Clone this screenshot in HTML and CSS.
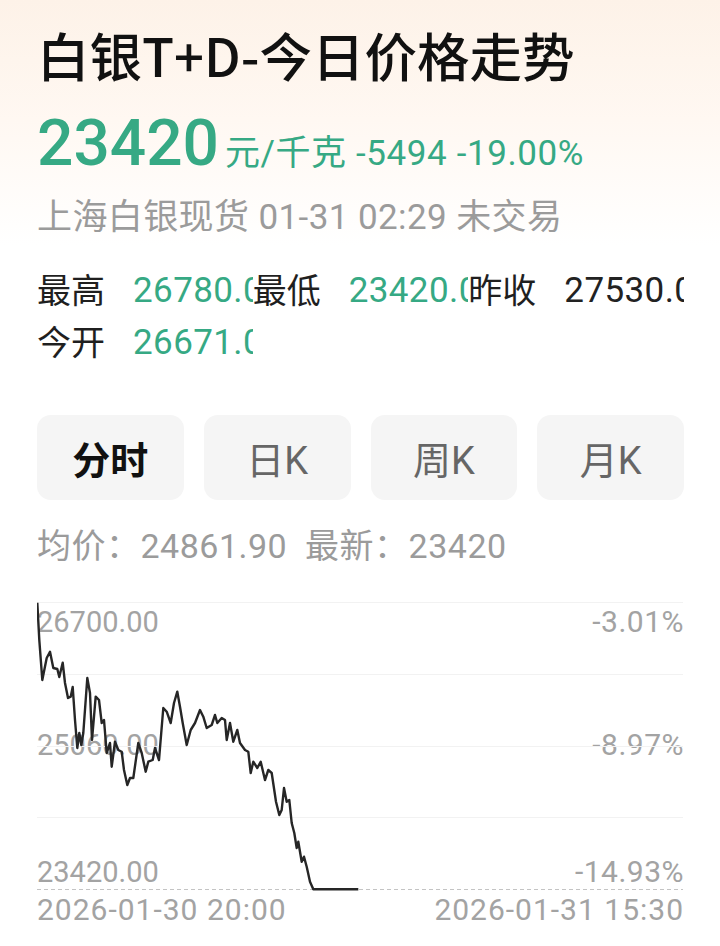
FILE: index.html
```html
<!DOCTYPE html>
<html lang="zh-CN">
<head>
<meta charset="utf-8">
<title>白银T+D-今日价格走势</title>
<link rel="stylesheet" href="styles.css">
</head>
<body>
<div class="page">
  <h1 class="title">白银T+D-今日价格走势</h1>
  <div class="price-line"><span class="price">23420</span><span class="change">元/千克 -5494 -19.00%</span></div>
  <div class="meta">上海白银现货 01-31 02:29 未交易</div>

  <div class="stats">
    <div class="stat"><span class="label">最高</span><span class="value up">26780.00</span></div>
    <div class="stat"><span class="label">最低</span><span class="value up">23420.00</span></div>
    <div class="stat"><span class="label">昨收</span><span class="value">27530.00</span></div>
    <div class="stat"><span class="label">今开</span><span class="value up">26671.00</span></div>
  </div>

  <div class="tabs">
    <div class="tab active">分时</div>
    <div class="tab">日K</div>
    <div class="tab">周K</div>
    <div class="tab">月K</div>
  </div>

  <div class="avg">均价：24861.90 &nbsp;最新：23420</div>

  <div class="chart">
    <div class="axis-label l1">26700.00</div>
    <div class="axis-label l2">25060.00</div>
    <div class="axis-label l3">23420.00</div>
    <div class="axis-label r1">-3.01%</div>
    <div class="axis-label r2">-8.97%</div>
    <div class="axis-label r3">-14.93%</div>
    <div class="axis-label t1">2026-01-30 20:00</div>
    <div class="axis-label t2">2026-01-31 15:30</div>
    <svg class="plot" width="646" height="350" viewBox="37 596 646 350">
      <g stroke="#f2f2f2" stroke-width="1">
        <line x1="37" y1="602.5" x2="683" y2="602.5"/>
        <line x1="37" y1="674.5" x2="683" y2="674.5"/>
        <line x1="37" y1="746.5" x2="683" y2="746.5"/>
        <line x1="37" y1="817.5" x2="683" y2="817.5"/>
      </g>
      <line x1="37" y1="889.5" x2="683" y2="889.5" stroke="#c4c4c4" stroke-width="1" stroke-dasharray="4 3"/>
      <path fill="none" stroke="#262626" stroke-width="2.4" stroke-linejoin="round" d="M37.3 602.7 L39.3 640 L42.3 680 L46.7 658 L50 651.7 L53.3 668 L57.3 669 L59.3 677 L62.7 662.7 L65 683 L68 698 L70.7 696.7 L72.7 687 L75 720 L77.3 748 L79.3 733 L81.3 745 L83.3 733 L87.3 678 L90 693 L92 740 L95.7 696.7 L99 700 L101.7 723 L104 720 L106.7 753 L110 743 L111.7 766.7 L115 741.7 L118.3 750 L121.7 751.7 L124 770 L127.3 785 L130 778 L133.3 778 L138.3 743 L141.7 753 L145.7 771.7 L148.3 761.7 L152.7 760 L155 748 L159 760 L163.3 708 L166.7 711.7 L170.7 723 L174 703 L177.3 691.7 L180 706.7 L182.7 723 L186.7 745 L190.7 730 L195 723 L200 710 L203.3 716.7 L206.7 728 L211.7 725 L215 715 L217.3 723 L221.7 718 L225 720 L226.7 740 L230 723 L233.3 741.7 L237.3 730 L240 743 L245 750 L248.3 751.7 L250.7 773 L253.3 761.7 L257.3 768 L260.7 761.7 L265 780 L268.3 770 L271.7 773 L276 801.7 L279.3 815 L281.7 810 L284 788 L286.7 801.7 L289.3 800 L291.7 823 L294.3 833 L296.7 848 L298.3 841.7 L301.7 861.7 L304 856.7 L306.7 866.7 L310 881.7 L313.3 889.3 L358.3 889.3"/>
    </svg>
  </div>
</div>
</body>
</html>
```

FILE: styles.css
```css
* { box-sizing: border-box; }

html, body {
  margin: 0;
  padding: 0;
  background: #fff;
}

body {
  font-family: Roboto, "Noto Sans CJK SC", sans-serif;
  color: #1a1a1a;
}

.page {
  width: 720px;
  height: 946px;
  overflow: hidden;
  padding: 22px 36px 0 37px;
  background: linear-gradient(180deg, #fdf2e8 0px, #fff8f2 120px, #ffffff 245px) no-repeat;
}

.title {
  margin: 0;
  font-family: "Noto Sans CJK SC", sans-serif;
  font-size: 52.5px;
  font-weight: 500;
  line-height: 64px;
  color: #111;
  white-space: nowrap;
}

.price-line {
  margin-top: 20px;
  height: 76px;
  line-height: 76px;
  white-space: nowrap;
  color: #36a984;
}

.price {
  font-size: 64px;
  font-weight: 500;
  margin-right: 6px;
}

.change {
  font-size: 35px;
  line-height: 1;
  letter-spacing: 0.6px;
}

.meta {
  margin-top: 14px;
  font-size: 35px;
  line-height: 44px;
  letter-spacing: 0.4px;
  color: #9b9b9b;
  white-space: nowrap;
}

.stats {
  margin-top: 25px;
  display: grid;
  grid-template-columns: repeat(3, 1fr);
  font-size: 34px;
  line-height: 52px;
}

.stat {
  display: flex;
  min-width: 0;
  overflow: hidden;
  white-space: nowrap;
}

.stat .label {
  flex: 0 0 96px;
  color: #1f1f1f;
}

.stat .value {
  flex: 1 1 auto;
  min-width: 0;
  overflow: hidden;
  font-size: 35px;
  letter-spacing: 0.4px;
  color: #222;
}

.stat .value.up { color: #36a984; }

.tabs {
  margin-top: 46px;
  display: grid;
  grid-template-columns: repeat(4, 1fr);
  gap: 20px;
}

.tab {
  height: 85px;
  border-radius: 14px;
  background: #f5f5f5;
  display: flex;
  align-items: center;
  justify-content: center;
  font-size: 38px;
  color: #666;
}

.tab.active {
  color: #111;
  font-weight: 700;
}

.avg {
  margin-top: 24px;
  font-size: 34px;
  line-height: 44px;
  letter-spacing: 0.5px;
  color: #9b9b9b;
  white-space: nowrap;
}

.chart {
  position: relative;
  margin-top: 28px;
  height: 350px;
}

.plot {
  position: absolute;
  left: 0;
  top: 0;
  z-index: 1;
  display: block;
}

.axis-label {
  position: absolute;
  font-size: 29px;
  line-height: 28px;
  color: #a3a3a3;
  white-space: nowrap;
}

.r1, .r2, .r3 { font-size: 30px; letter-spacing: 0.5px; }
.t1, .t2 { font-size: 30px; letter-spacing: 1px; }

.l1, .r1 { top: 12px; }
.l2, .r2 { top: 135px; }
.l3, .r3 { top: 262px; }
.t1, .t2 { top: 300px; }
.l1, .l2, .l3, .t1 { left: 0; }
.r1, .r2, .r3, .t2 { right: 0; }
```
